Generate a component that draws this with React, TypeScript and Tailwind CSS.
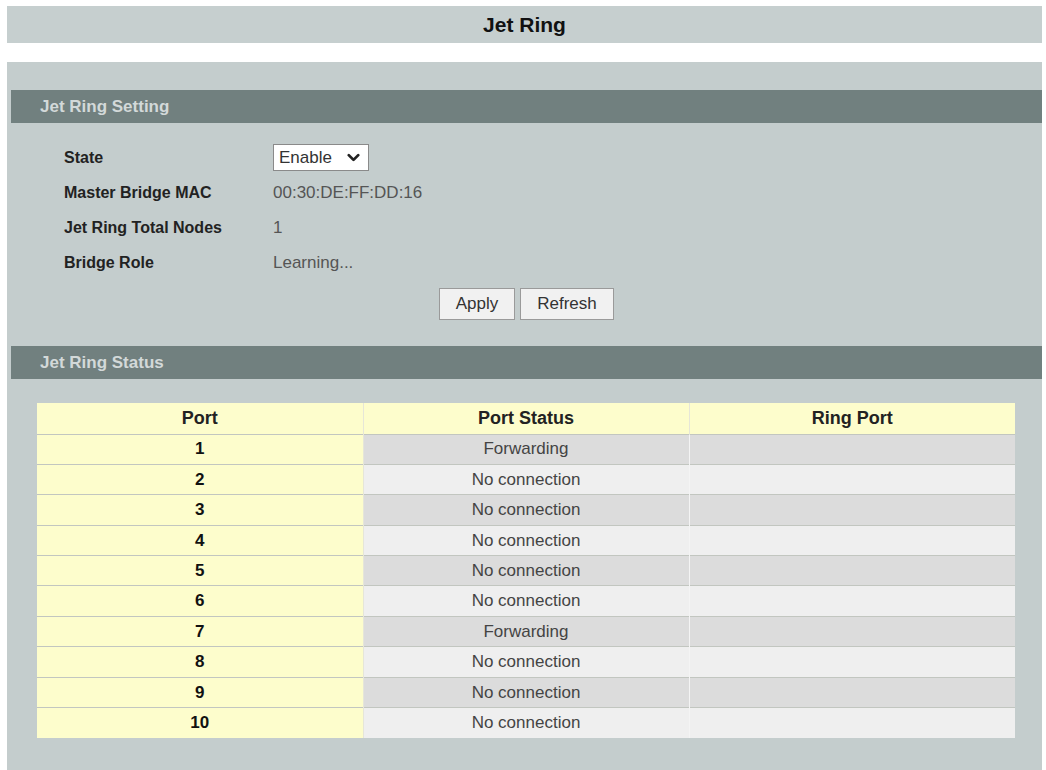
import { ChevronDown } from "lucide-react";

const settings = [
  { label: "Master Bridge MAC", value: "00:30:DE:FF:DD:16" },
  { label: "Jet Ring Total Nodes", value: "1" },
  { label: "Bridge Role", value: "Learning..." },
];

const ports = [
  { port: 1, status: "Forwarding" },
  { port: 2, status: "No connection" },
  { port: 3, status: "No connection" },
  { port: 4, status: "No connection" },
  { port: 5, status: "No connection" },
  { port: 6, status: "No connection" },
  { port: 7, status: "Forwarding" },
  { port: 8, status: "No connection" },
  { port: 9, status: "No connection" },
  { port: 10, status: "No connection" },
];

function SectionBar({ title }: { title: string }) {
  return (
    <div className="ml-[4px] flex h-[33px] items-center bg-[#71807f] pl-[29px] text-[17px] font-bold text-[#d3d9d9]">
      {title}
    </div>
  );
}

export default function App() {
  return (
    <div className="h-[770px] w-[1046px] overflow-hidden bg-white font-['Liberation_Sans',Arial,sans-serif]">
      {/* page title */}
      <div className="mt-[6px] ml-[7px] mr-[4px] flex h-[37px] items-center justify-center bg-[#c6cfcf] text-[21px] font-bold text-[#111]">
        Jet Ring
      </div>

      <div className="mt-[19px] ml-[7px] mr-[4px] h-[708px] bg-[#c4cdcd] pt-[28px]">
        <SectionBar title="Jet Ring Setting" />

        <div className="pt-[17px] pl-[57px]">
          <div className="flex h-[35px] items-center">
            <div className="w-[209px] text-[16px] font-bold text-[#222]">State</div>
            <div className="flex h-[27px] w-[96px] items-center justify-between border border-[#8a8a8a] bg-white pl-[5px] pr-[5px] text-[17px] text-[#333]">
              <span>Enable</span>
              <ChevronDown size={19} strokeWidth={3.5} className="text-[#222]" />
            </div>
          </div>
          {settings.map((s) => (
            <div key={s.label} className="flex h-[35px] items-center">
              <div className="w-[209px] text-[16px] font-bold text-[#222]">{s.label}</div>
              <div className="text-[17px] text-[#555]">{s.value}</div>
            </div>
          ))}
        </div>

        <div className="mt-[8px] flex justify-center gap-[5px] pl-[4px]">
          <button className="h-[32px] w-[76px] border border-[#9a9a9a] bg-[#f1f1f1] text-[17px] text-[#333]">
            Apply
          </button>
          <button className="h-[32px] w-[94px] border border-[#9a9a9a] bg-[#f1f1f1] text-[17px] text-[#333]">
            Refresh
          </button>
        </div>

        <div className="mt-[26px]">
          <SectionBar title="Jet Ring Status" />
        </div>

        <div className="mt-[24px] ml-[30px] w-[978px]">
          <table className="w-full table-fixed border-collapse text-center">
            <thead>
              <tr className="h-[31px] bg-[#fdfdcc] text-[18px] font-bold text-[#222]">
                <th className="border-r border-[#e6e6d8]">Port</th>
                <th className="border-r border-[#e6e6d8]">Port Status</th>
                <th>Ring Port</th>
              </tr>
            </thead>
            <tbody>
              {ports.map((p, i) => (
                <tr key={p.port} className="h-[30.4px] border-t border-[#c2c6c0] text-[17px]">
                  <td className="border-r border-[#e6e6d8] bg-[#fdfdcc] font-bold text-[#111]">{p.port}</td>
                  <td
                    className={
                      i % 2 === 0
                        ? "border-r border-[#f4f4f4] bg-[#dcdcdc] text-[#444]"
                        : "border-r border-[#f4f4f4] bg-[#efefef] text-[#444]"
                    }
                  >
                    {p.status}
                  </td>
                  <td className={i % 2 === 0 ? "bg-[#dcdcdc]" : "bg-[#efefef]"}></td>
                </tr>
              ))}
            </tbody>
          </table>
        </div>
      </div>
    </div>
  );
}
